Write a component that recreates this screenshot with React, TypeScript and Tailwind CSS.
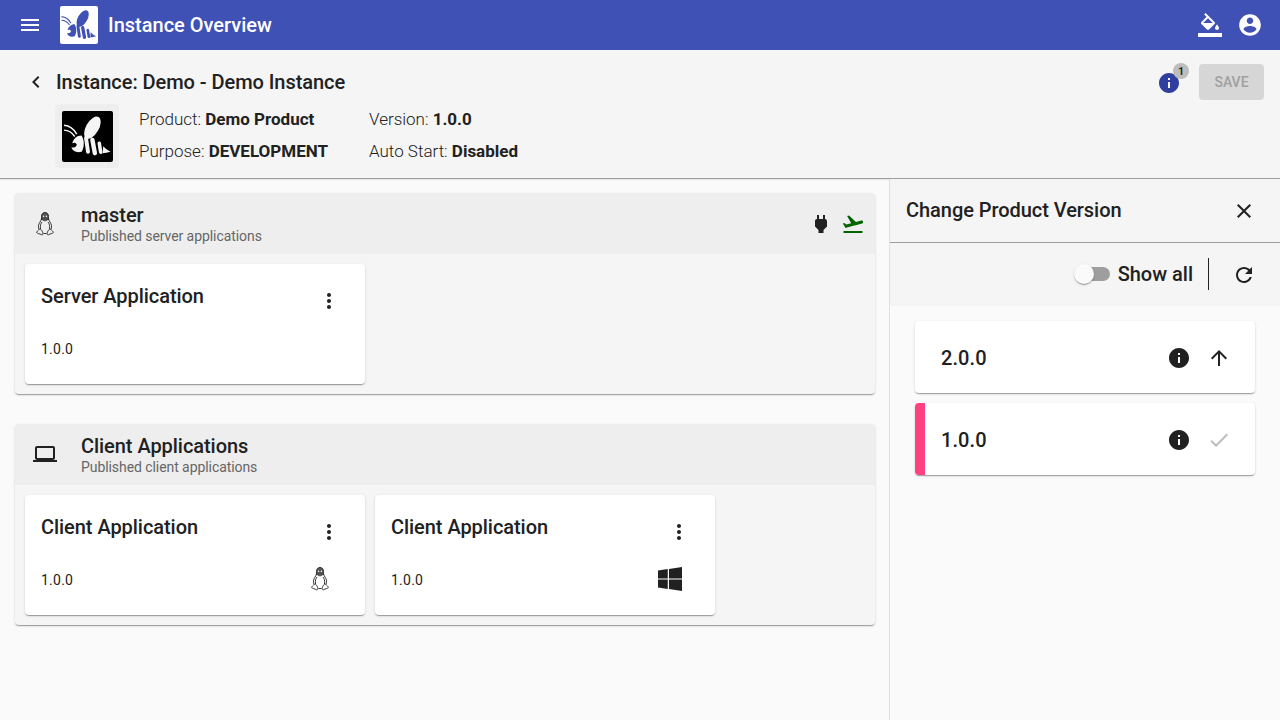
import React from "react";

const MENU = "M3 18h18v-2H3v2zm0-5h18v-2H3v2zm0-7v2h18V6H3z";
const BACK = "M15.41 7.41L14 6l-6 6 6 6 1.41-1.41L10.83 12z";
const FILL =
  "M16.56 8.94L7.62 0 6.21 1.41l2.38 2.38-5.15 5.15c-.59.59-.59 1.54 0 2.12l5.5 5.5c.29.29.68.44 1.06.44s.77-.15 1.06-.44l5.5-5.5c.59-.58.59-1.53 0-2.12zM5.21 10L10 5.21 14.79 10H5.21zM19 11.5s-2 2.17-2 3.5c0 1.1.9 2 2 2s2-.9 2-2c0-1.33-2-3.5-2-3.5zM0 20h24v4H0z";
const ACCOUNT =
  "M12 2C6.48 2 2 6.48 2 12s4.48 10 10 10 10-4.48 10-10S17.52 2 12 2zm0 3c1.66 0 3 1.34 3 3s-1.34 3-3 3-3-1.34-3-3 1.34-3 3-3zm0 14.2c-2.5 0-4.71-1.28-6-3.22.03-1.99 4-3.08 6-3.08 1.99 0 5.97 1.09 6 3.08-1.29 1.94-3.5 3.22-6 3.22z";
const INFO =
  "M12 2C6.48 2 2 6.48 2 12s4.48 10 10 10 10-4.48 10-10S17.52 2 12 2zm1 15h-2v-6h2v6zm0-8h-2V7h2v2z";
const PLUG =
  "M16.01 7L16 3h-2v4h-4V3H8v4h-.01C7 6.99 6 7.99 6 8.99v5.49L9.5 18v3h5v-3l3.5-3.51v-5.5c0-1-1-2-1.99-1.99z";
const TAKEOFF =
  "M2.5 19h19v2h-19zm19.57-9.36c-.21-.8-1.04-1.28-1.84-1.06L14.92 10l-6.9-6.43-1.93.51 4.14 7.17-4.97 1.33-1.97-1.54-1.45.39 1.82 3.16.77 1.33 1.6-.43 5.31-1.42 4.35-1.16L21 11.49c.81-.23 1.28-1.05 1.07-1.85z";
const MORE =
  "M12 8c1.1 0 2-.9 2-2s-.9-2-2-2-2 .9-2 2 .9 2 2 2zm0 2c-1.1 0-2 .9-2 2s.9 2 2 2 2-.9 2-2-.9-2-2-2zm0 6c-1.1 0-2 .9-2 2s.9 2 2 2 2-.9 2-2-.9-2-2-2z";
const LAPTOP =
  "M20 18c1.1 0 1.99-.9 1.99-2L22 6c0-1.1-.9-2-2-2H4c-1.1 0-2 .9-2 2v10c0 1.1.9 2 2 2H0v2h24v-2h-4zM4 6h16v10H4V6z";
const CLOSE =
  "M19 6.41L17.59 5 12 10.59 6.41 5 5 6.41 10.59 12 5 17.59 6.41 19 12 13.41 17.59 19 19 17.59 13.41 12z";
const REFRESH =
  "M17.65 6.35C16.2 4.9 14.21 4 12 4c-4.42 0-7.99 3.58-7.99 8s3.57 8 7.99 8c3.73 0 6.84-2.55 7.73-6h-2.08c-.82 2.33-3.04 4-5.65 4-3.31 0-6-2.69-6-6s2.69-6 6-6c1.66 0 3.14.69 4.22 1.78L13 11h7V4l-2.35 2.35z";
const UP = "M4 12l1.41 1.41L11 7.83V20h2V7.83l5.58 5.59L20 12l-8-8-8 8z";
const CHECK = "M9 16.17L4.83 12l-1.42 1.41L9 19 21 7l-1.41-1.41z";
const WINDOWS =
  "M0 3.45L9.75 2.1v9.4H0zM11 1.9L24 0v11.5H11zM0 12.5h9.75v9.45L0 20.6zM11 12.5h13V24l-13-1.9z";

const cardShadow =
  "shadow-[0_2px_1px_-1px_rgba(0,0,0,0.2),0_1px_1px_0_rgba(0,0,0,0.14),0_1px_3px_0_rgba(0,0,0,0.12)]";

function Icon({ d, className }: { d: string; className?: string }) {
  return (
    <svg viewBox="0 0 24 24" fill="currentColor" className={className ?? "h-6 w-6"}>
      <path d={d} />
    </svg>
  );
}

function Bee({ className }: { className?: string }) {
  return (
    <svg viewBox="0 0 52 52" fill="currentColor" className={className}>
      <ellipse cx="31" cy="17" rx="6.5" ry="12.5" transform="rotate(30 31 17)" />
      <path d="M2 14.500C8 15 12 18 15 23.500" fill="none" stroke="currentColor" strokeWidth="1.5" />
      <path d="M2 19.500C7 19.500 10 21.500 13 26" fill="none" stroke="currentColor" strokeWidth="1.5" />
      <path d="M20 25C23 30 23 37 20 41.500C15 43 10.500 41 9.500 37C13 38 15 36.500 15 34C14 32 12 32 10.500 33C11.500 28.500 15 25 20 25Z" />
      <path d="M24.500 27.500L26.500 41.500" fill="none" stroke="currentColor" strokeWidth="4" strokeLinecap="round" />
      <path d="M31 29.500L33.500 43" fill="none" stroke="currentColor" strokeWidth="4.500" strokeLinecap="round" />
      <path d="M38 33L39.500 42" fill="none" stroke="currentColor" strokeWidth="3.600" strokeLinecap="round" />
      <path d="M42 36Q45 39.500 49.500 41.500Q45 43 41.500 43Z" />
    </svg>
  );
}

function Penguin({ className }: { className?: string }) {
  return (
    <svg viewBox="0 0 18 24" fill="none" stroke="currentColor" strokeWidth="0.9" className={className}>
      <path
        d="M9 .5C6.500.5 5.500 2.500 5.500 4.500c0 1 .2 1.800-.2 2.800h7.400c-.4-1-.2-1.800-.2-2.800C12.500 2.500 11.500.5 9 .5z"
        fill="currentColor"
        fillOpacity="0.75"
      />
      <circle cx="7.600" cy="4.300" r="0.7" fill="#ffffff" stroke="none" />
      <circle cx="10.400" cy="4.300" r="0.7" fill="#ffffff" stroke="none" />
      <path d="M5.500 7C5 9 3 11 2.500 13.500c-.2 1.500 0 2.500.4 3.500M12.500 7c.5 2 2.500 4 3 6.500.2 1.500 0 2.500-.4 3.500" />
      <path d="M6.500 8c1 1 4 1 5 0M6 10c-1.200 1.500-2 3.500-1.500 7M12 10c1.200 1.500 2 3.500 1.500 7" />
      <path d="M3.500 17c-1 1.500-3 2.500-2.800 3.500.2 1.200 3 1 5 2.300 1 .4 1.500-.8 1-2.300-.4-1.300-1.500-3.500-3.200-3.500zM14.500 17c1 1.500 3 2.500 2.800 3.500-.2 1.200-3 1-5 2.300-1 .4-1.500-.8-1-2.300.4-1.300 1.500-3.500 3.200-3.500z" />
      <path d="M7.500 21.500h3" />
    </svg>
  );
}

function AppCard({ name, os }: { name: string; os?: "linux" | "windows" }) {
  return (
    <div className={`flex h-[120px] w-[340px] flex-col justify-between rounded bg-white pt-[18px] pr-6 pb-[23px] pl-4 ${cardShadow}`}>
      <div className="flex items-start justify-between">
        <span className="text-[20px] leading-[28px] font-medium tracking-[-0.05px]">{name}</span>
        <Icon d={MORE} className="mt-[7px] h-6 w-6" />
      </div>
      <div className="flex h-6 items-center justify-between">
        <span className="text-[14px] leading-5 tracking-[0.25px]">1.0.0</span>
        {os === "linux" && <Penguin className="mt-[-2px] mr-[12px] h-6 w-[18px] text-[#212121]" />}
        {os === "windows" && <Icon d={WINDOWS} className="mt-[-2px] mr-[9px] h-6 w-6" />}
      </div>
    </div>
  );
}

function Group({
  title,
  subtitle,
  icon,
  actions,
  children,
}: {
  title: string;
  subtitle: string;
  icon: React.ReactNode;
  actions?: React.ReactNode;
  children: React.ReactNode;
}) {
  return (
    <section className={`overflow-hidden rounded bg-[#f5f5f5] ${cardShadow}`}>
      <div className="flex h-[61px] items-center bg-[#eeeeee] pr-[10px] pl-[18px]">
        <div className="flex w-6 justify-center">{icon}</div>
        <div className="ml-[24px] flex flex-col">
          <span className="text-[20px] leading-[24px] font-medium tracking-[-0.05px]">{title}</span>
          <span className="text-[14px] leading-[18px] tracking-[-0.07px] text-[#666666]">{subtitle}</span>
        </div>
        <div className="ml-auto flex gap-2">{actions}</div>
      </div>
      <div className="flex gap-[10px] p-[10px]">{children}</div>
    </section>
  );
}

function VersionCard({ version, current }: { version: string; current?: boolean }) {
  return (
    <div className={`flex h-[72px] overflow-hidden rounded bg-white ${cardShadow}`}>
      <div className={`w-[10px] ${current ? "bg-[#ff4081]" : ""}`} />
      <div className="flex flex-1 items-center pt-[2px]">
        <span className="ml-4 text-[20px] font-medium tracking-[0.1px]">{version}</span>
        <div className="mr-6 ml-auto flex gap-4">
          <Icon d={INFO} />
          {current ? <Icon d={CHECK} className="h-6 w-6 text-[#bdbdbd]" /> : <Icon d={UP} />}
        </div>
      </div>
    </div>
  );
}

export default function App() {
  return (
    <div className="flex h-[720px] w-[1280px] flex-col overflow-hidden bg-[#fafafa] font-['Roboto',sans-serif] text-[#212121]">
      <header className="flex h-[50px] shrink-0 items-center bg-[#3f51b5] pr-[17px] pl-[18px] text-white">
        <Icon d={MENU} />
        <div className="ml-[18px] flex h-[38px] w-[38px] items-center justify-center rounded-[2px] bg-white text-[#3f51b5]">
          <Bee className="h-[38px] w-[38px]" />
        </div>
        <span className="ml-[10px] text-[20px] font-medium">Instance Overview</span>
        <div className="ml-auto flex items-center gap-[15px]">
          <Icon d={FILL} />
          <Icon d={ACCOUNT} className="h-[26px] w-[26px]" />
        </div>
      </header>

      <div className="flex h-[129px] shrink-0 border-b border-[#9e9e9e] bg-[#f5f5f5] shadow-[0_1px_1px_rgba(0,0,0,0.08)]">
        <div className="flex flex-col pt-[18px] pl-[24px]">
          <div className="flex h-[28px] items-center">
            <Icon d={BACK} />
            <span className="ml-2 text-[20px] font-medium tracking-[-0.05px]">Instance: Demo - Demo Instance</span>
          </div>
          <div className="mt-[8px] ml-[31px] flex">
            <div className="flex h-16 w-16 items-center justify-center rounded-[4px] bg-[#eeeeee]">
              <div className="flex h-[51px] w-[51px] items-center justify-center rounded-[2px] bg-black text-[#f5f5f5]">
                <Bee className="h-[51px] w-[51px]" />
              </div>
            </div>
            <div className="ml-5 grid grid-cols-[230px_auto] content-center gap-y-[8px] pb-[2px] text-[17px] leading-6 font-light">
              <span>Product: <b className="font-bold">Demo Product</b></span>
              <span>Version: <b className="font-bold">1.0.0</b></span>
              <span>Purpose: <b className="font-bold">DEVELOPMENT</b></span>
              <span>Auto Start: <b className="font-bold">Disabled</b></span>
            </div>
          </div>
        </div>
        <div className="ml-auto flex items-start pt-[14px] pr-4">
          <div className="relative mt-[7px] h-6 w-6 text-[#303f9f]">
            <Icon d={INFO} />
            <span className="absolute top-[-8px] left-[16px] flex h-4 w-4 items-center justify-center rounded-full bg-[#bdbdbd] text-[10px] font-bold text-[#212121]">
              1
            </span>
          </div>
          <button className="ml-[18px] h-9 w-[65px] rounded bg-[#d6d6d6] text-[14px] font-medium text-[#a0a0a0]">SAVE</button>
        </div>
      </div>

      <div className="flex min-h-0 flex-1">
        <main className="flex flex-1 flex-col gap-[30px] pt-[14px] pr-[14px] pl-[15px]">
          <Group
            title="master"
            subtitle="Published server applications"
            icon={<Penguin className="h-6 w-[18px]" />}
            actions={
              <>
                <Icon d={PLUG} />
                <Icon d={TAKEOFF} className="h-6 w-6 text-[#006400]" />
              </>
            }
          >
            <AppCard name="Server Application" />
          </Group>
          <Group
            title="Client Applications"
            subtitle="Published client applications"
            icon={<Icon d={LAPTOP} className="mt-[-2px] h-6 w-6" />}
          >
            <AppCard name="Client Application" os="linux" />
            <AppCard name="Client Application" os="windows" />
          </Group>
        </main>

        <aside className="flex w-[391px] shrink-0 flex-col border-l border-[#e0e0e0]">
          <div className="flex h-[64px] shrink-0 items-center border-b border-[#9e9e9e] bg-[#f5f5f5] pr-6 pl-4">
            <span className="mb-[2px] text-[20px] font-medium tracking-[-0.05px]">Change Product Version</span>
            <Icon d={CLOSE} className="ml-auto h-6 w-6" />
          </div>
          <div className="flex h-[63px] shrink-0 items-center justify-end bg-[#f5f5f5] pr-6 pb-[2px]">
            <div className="relative h-[14px] w-[34px] rounded-full bg-[#9e9e9e]">
              <div className="absolute top-[-3px] left-[-2px] h-5 w-5 rounded-full bg-[#fafafa] shadow-[0_2px_1px_-1px_rgba(0,0,0,0.2),0_1px_1px_0_rgba(0,0,0,0.14),0_1px_3px_0_rgba(0,0,0,0.12)]" />
            </div>
            <span className="ml-2 text-[20px] font-medium">Show all</span>
            <div className="mx-[15px] h-8 w-px bg-[#212121]" />
            <Icon d={REFRESH} className="mt-[2px] ml-[8px] h-6 w-6" />
          </div>
          <div className="flex flex-col gap-[10px] px-[25px] pt-[15px]">
            <VersionCard version="2.0.0" />
            <VersionCard version="1.0.0" current />
          </div>
        </aside>
      </div>
    </div>
  );
}
